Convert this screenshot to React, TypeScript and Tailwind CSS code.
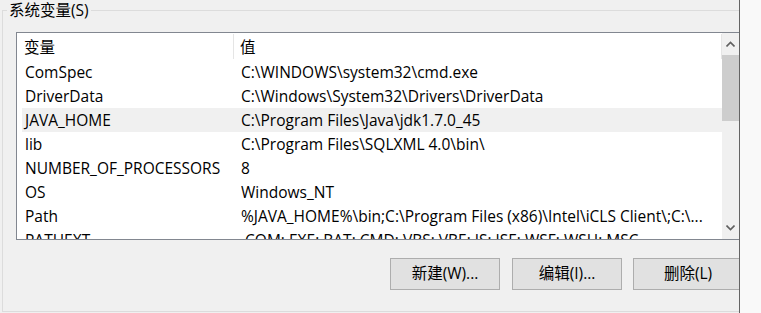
import React from 'react';

// 系统变量 list as in the Windows environment variables dialog
const rows: { name: string; value: string }[] = [
  { name: 'ComSpec', value: 'C:\\WINDOWS\\system32\\cmd.exe' },
  { name: 'DriverData', value: 'C:\\Windows\\System32\\Drivers\\DriverData' },
  { name: 'JAVA_HOME', value: 'C:\\Program Files\\Java\\jdk1.7.0_45' },
  { name: 'lib', value: 'C:\\Program Files\\SQLXML 4.0\\bin\\' },
  { name: 'NUMBER_OF_PROCESSORS', value: '8' },
  { name: 'OS', value: 'Windows_NT' },
  { name: 'Path', value: '%JAVA_HOME%\\bin;C:\\Program Files (x86)\\Intel\\iCLS Client\\;C:\\...' },
  { name: 'PATHEXT', value: '.COM;.EXE;.BAT;.CMD;.VBS;.VBE;.JS;.JSE;.WSF;.WSH;.MSC' },
];

const font = { fontFamily: '"Segoe UI", "Open Sans", "Noto Sans CJK SC", sans-serif' };

function Chevron({ up }: { up?: boolean }) {
  return (
    <svg width="9" height="6" viewBox="0 0 9 6" className="block">
      <path
        d={up ? 'M0.5 5.5 L4.5 1.5 L8.5 5.5' : 'M0.5 0.5 L4.5 4.5 L8.5 0.5'}
        fill="none"
        stroke="#606060"
        strokeWidth="1.6"
      />
    </svg>
  );
}

function WinButton({ label }: { label: string }) {
  return (
    <button className="h-[32px] w-[110px] shrink-0 border border-[#adadad] bg-[#e1e1e1] text-[15.5px] text-black flex items-center justify-center">
      {label}
    </button>
  );
}

export default function App() {
  const selected = 'JAVA_HOME';
  return (
    <div className="w-[761px] h-[313px] flex overflow-hidden bg-[#f0f0f0] text-black" style={font}>
      <div className="w-[740px] h-full shrink-0 border-r border-[#646464] overflow-hidden pl-[2px] pt-[10px]">
        <div className="relative h-[302px] w-[760px] border-l border-t border-b border-[#dcdcdc]">
          <span className="absolute left-[4px] top-[-11px] bg-[#f0f0f0] px-[2px] text-[15.5px] leading-[20px]">
            系统变量(S)
          </span>

          <div className="ml-[13px] mt-[21px] h-[208px] w-[740px] border-l border-t border-b border-[#828790] bg-white flex">
            <div className="w-[705px] shrink-0 overflow-hidden">
              <div className="h-[27px] flex items-center text-[15.5px]">
                <div className="w-[217px] shrink-0 pl-[7px] pt-[3px] border-r border-[#e5e5e5] h-[25px] flex items-center">变量</div>
                <div className="flex-1 pl-[6px] pt-[3px] border-r border-[#e5e5e5] h-[25px] flex items-center">值</div>
              </div>
              {rows.map((r) => (
                <div
                  key={r.name}
                  className={`h-[24px] ml-[5px] pt-[2px] flex items-center text-[15.5px] whitespace-nowrap ${
                    r.name === selected ? 'bg-[#f0f0f0]' : ''
                  }`}
                >
                  <div className="w-[219px] shrink-0 pl-[3px]">{r.name}</div>
                  <div className="flex-1 overflow-hidden">{r.value}</div>
                </div>
              ))}
            </div>
            <div className="w-[17px] shrink-0 bg-[#f0f0f0] flex flex-col">
              <div className="h-[22px] flex items-center justify-center">
                <Chevron up />
              </div>
              <div className="h-[66px] bg-[#cdcdcd]" />
              <div className="flex-1" />
              <div className="h-[22px] flex items-center justify-center">
                <Chevron />
              </div>
            </div>
          </div>

          <div className="mt-[18px] ml-[387px] flex gap-[12px]">
            <WinButton label="新建(W)..." />
            <WinButton label="编辑(I)..." />
            <div className="-ml-[1px]">
              <WinButton label="删除(L)" />
            </div>
          </div>
        </div>
      </div>
      <div className="flex-1 bg-[#f9f9f9]" />
    </div>
  );
}
